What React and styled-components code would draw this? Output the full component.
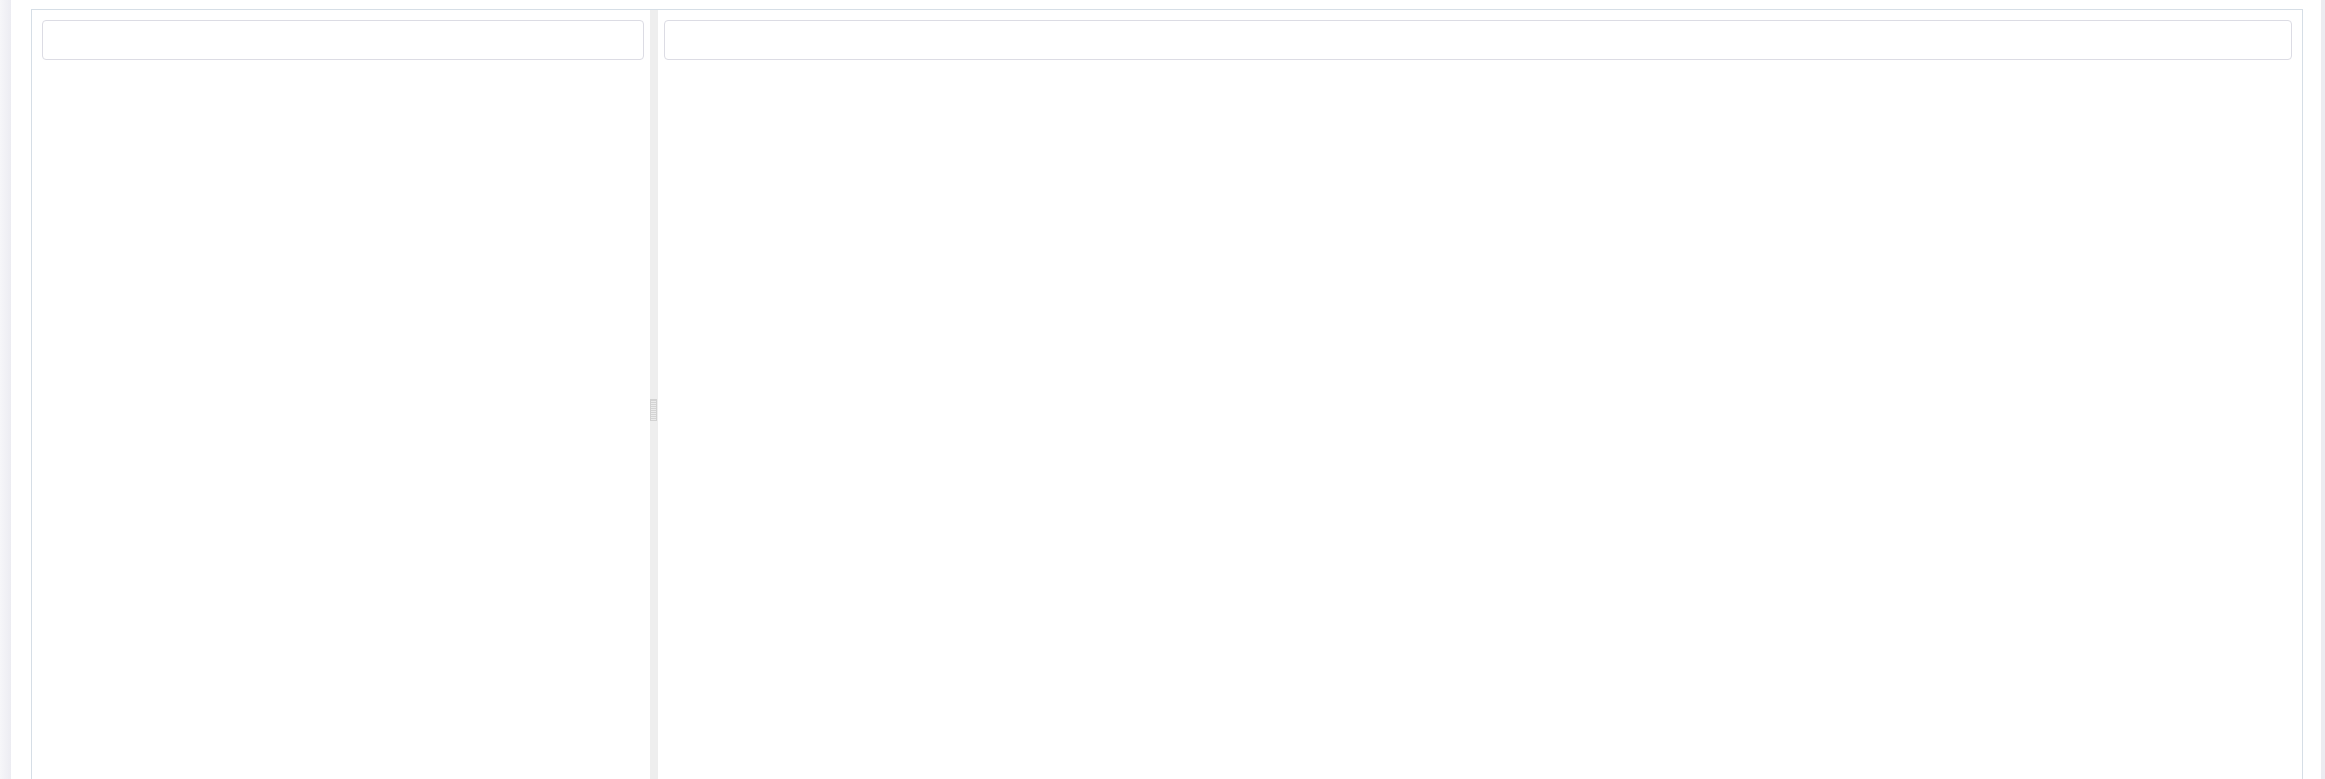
import React from 'react';
import styled, { createGlobalStyle } from 'styled-components';

const GlobalStyle = createGlobalStyle`
  html, body {
    margin: 0;
    padding: 0;
    background: #ffffff;
    overflow: hidden;
    font-family: "Liberation Sans", Arial, sans-serif;
  }
`;

const Page = styled.div`
  display: flex;
  height: 100vh;
  overflow: hidden;
`;

const SideStrip = styled.div`
  width: 11px;
  flex-shrink: 0;
  background: linear-gradient(to right, #f6f6f9, #ececf2);
`;

const Main = styled.main`
  flex: 1;
  padding: 9px 0 0 20px;
`;

const RightStrip = styled.div`
  width: 4px;
  margin-left: 18px;
  flex-shrink: 0;
  background: #ececf1;
`;

const SplitView = styled.div`
  display: flex;
  height: 800px;
  border: 1px solid #d6dee6;
  border-bottom: none;
`;

const Pane = styled.section`
  box-sizing: border-box;
  width: ${p => (p.$width ? `${p.$width}px` : 'auto')};
  flex: ${p => (p.$width ? '0 0 auto' : '1')};
  padding: ${p => (p.$side === 'left' ? '10px 6px 0 10px' : '10px 10px 0 6px')};
`;

const SearchBox = styled.input`
  display: block;
  box-sizing: border-box;
  width: 100%;
  height: 40px;
  border: 1px solid #dcdce4;
  border-radius: 4px;
  background: #fff;
  outline: none;
  font: inherit;
`;

const Splitter = styled.div`
  width: 8px;
  flex-shrink: 0;
  background: #eeeeee;
  display: flex;
  align-items: center;
`;

const Grip = styled.div`
  width: 7px;
  height: 22px;
  box-sizing: border-box;
  border: 1px solid #d2d2d2;
  background: repeating-linear-gradient(
    to bottom,
    #d4d4d4 0,
    #d4d4d4 1px,
    #ebebeb 1px,
    #ebebeb 2px
  );
`;

export default function App() {
  return (
    <>
      <GlobalStyle />
      <Page>
        <SideStrip />
        <Main>
          <SplitView>
            <Pane $side="left" $width={618}>
              <SearchBox type="text" />
            </Pane>
            <Splitter>
              <Grip />
            </Splitter>
            <Pane $side="right">
              <SearchBox type="text" />
            </Pane>
          </SplitView>
        </Main>
        <RightStrip />
      </Page>
    </>
  );
}
